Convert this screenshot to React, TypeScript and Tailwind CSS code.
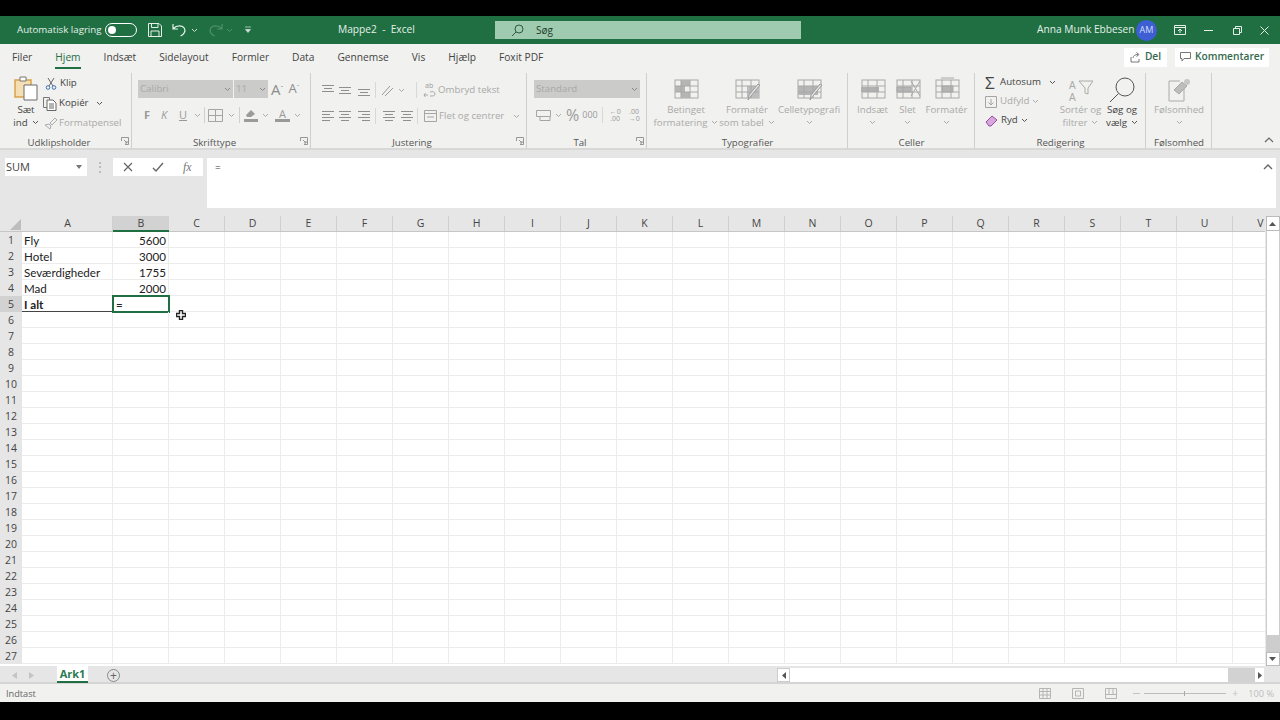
import type { ReactNode } from "react";

const COLS = ["C", "D", "E", "F", "G", "H", "I", "J", "K", "L", "M", "N", "O", "P", "Q", "R", "S", "T", "U", "V"];
const TABS = ["Filer", "Hjem", "Indsæt", "Sidelayout", "Formler", "Data", "Gennemse", "Vis", "Hjælp", "Foxit PDF"];
const ROWS = Array.from({ length: 27 }, (_, i) => i + 1);
const DATA: Record<number, [string, string]> = {
  1: ["Fly", "5600"],
  2: ["Hotel", "3000"],
  3: ["Seværdigheder", "1755"],
  4: ["Mad", "2000"],
};

function Chev({ c = "#8a8a8a", className = "" }: { c?: string; className?: string }) {
  return (
    <svg width="7" height="5" viewBox="0 0 7 5" className={className}>
      <path d="M1 1l2.5 2.5L6 1" fill="none" stroke={c} strokeWidth="1" />
    </svg>
  );
}

function Lines({ align, valign = 0 }: { align: "l" | "c" | "r"; valign?: number }) {
  const x = align === "l" ? 1 : align === "c" ? 3 : 5;
  const d =
    valign === 0
      ? `M1 1.5H13M${x} 4.5H${x + 8}M1 7.5H13M${x} 10.5H${x + 8}`
      : valign === 1
        ? "M1 1.5H13M3 4.5H11M1 7.5H13"
        : valign === 2
          ? "M1 3.5H13M3 6.5H11M1 9.5H13"
          : "M1 5.5H13M3 8.5H11M1 11.5H13";
  return (
    <svg width="14" height="12" viewBox="0 0 14 12">
      <path d={d} stroke="#8f8f8f" fill="none" />
    </svg>
  );
}

function TableIcon({ kind }: { kind: number }) {
  return (
    <svg width="28" height="26" viewBox="0 0 28 26">
      <rect x="3" y="3" width="23" height="18" fill="#f1f1ef" stroke="#a8a8a8" />
      {kind === 0 && <path d="M9 3h9v6H9zM3 9h10v6H3zM9 15h9v6H9z" fill="#b5b5b5" />}
      {kind === 1 && <path d="M14 9h12v12H14z" fill="#bdbdbd" />}
      {kind === 2 && <path d="M3 9h20v9H3z" fill="#b5b5b5" />}
      {kind === 3 && <path d="M2 10h18v5H2z" fill="#b0b0b0" />}
      {kind === 4 && <path d="M3 10h14v5H3zM17 4l9 15M26 4l-9 15" fill="#b5b5b5" stroke="#a8a8a8" />}
      {kind === 5 && <path d="M9 9h11v6H9zM8 1h13" fill="#b5b5b5" stroke="#a8a8a8" />}
      <path d="M3 9h23M3 15h23M9 3v18M18 3v18" stroke="#a8a8a8" fill="none" />
      {kind >= 1 && kind <= 2 && <path d="M27 8l-9 11-3 4 1-5 9-11z" fill="#e3e3e3" stroke="#9c9c9c" />}
    </svg>
  );
}

function BigBtn({ w, icon, l1, l2, chev, dark }: { w: number; icon: ReactNode; l1: string; l2?: string; chev?: boolean; dark?: boolean }) {
  const text = dark ? "text-[#444]" : "text-[#a9a9a9]";
  return (
    <div className={`flex flex-col items-center shrink-0 ${text}`} style={{ width: w }}>
      <div className="h-[26px] flex items-center justify-center">{icon}</div>
      <div className="leading-[13px] text-center whitespace-nowrap">{l1}</div>
      <div className="leading-[13px] flex items-center gap-1 whitespace-nowrap h-[13px]">
        {l2}
        {chev && <Chev c={dark ? "#555" : "#aaa"} />}
      </div>
    </div>
  );
}

function Launcher() {
  return (
    <svg width="8" height="8" viewBox="0 0 8 8" className="absolute right-[3px] bottom-[4px]">
      <path d="M.5 4V.5H7.5V7.5H4M3 3l3 3M6 4v2H4" fill="none" stroke="#8c8c8c" strokeWidth="0.9" />
    </svg>
  );
}

function Group({ w, label, launcher, children, sep = true }: { w: number; label: string; launcher?: boolean; children: ReactNode; sep?: boolean }) {
  return (
    <div className="relative shrink-0 h-[76px] flex flex-col" style={{ width: w }}>
      <div className="h-[63px] flex">{children}</div>
      <div className={`text-center text-[9.7px] leading-[13px] text-[#555] ${launcher ? "pr-[14px]" : ""}`}>{label}</div>
      {launcher && <Launcher />}
      {sep && <div className="absolute right-0 top-0 bottom-0 w-px bg-[#cfcfcd]" />}
    </div>
  );
}

function Cell({ w, children, className = "" }: { w: number; children?: ReactNode; className?: string }) {
  return (
    <div
      className={`shrink-0 h-4 border-r border-b border-[#ececec] font-['Lato',sans-serif] text-[11.6px] leading-[17px] text-[#222] overflow-hidden whitespace-nowrap ${className}`}
      style={{ width: w }}
    >
      {children}
    </div>
  );
}

function TitleBar() {
  return (
    <div className="h-[28px] bg-[#1f6f43] flex items-center text-[10.2px] text-[#e4efe8] shrink-0">
      <span className="ml-[17px] w-[88px] whitespace-nowrap text-[9.7px]">Automatisk lagring</span>
      <div className="w-[32px] h-[14px] rounded-full border border-white flex items-center pl-[2px]">
        <div className="w-[8px] h-[8px] rounded-full bg-white" />
      </div>
      <svg width="14" height="14" viewBox="0 0 14 14" className="ml-[11px]">
        <path d="M.5.5h10.5l2.5 2.5v10.5H.5zM3.5.5v4h6.5v-4M3 13.5V8h8v5.5" fill="none" stroke="#e4efe8" />
      </svg>
      <svg width="15" height="14" viewBox="0 0 15 14" className="ml-[10px]">
        <path d="M1 1v5h5M1.5 5.5c3-3.5 9-3.5 11 0 1.5 3-1 6-4 7.5" fill="none" stroke="#e4efe8" strokeWidth="1.2" />
      </svg>
      <Chev c="#cfe1d6" className="ml-[4px]" />
      <svg width="15" height="14" viewBox="0 0 15 14" className="ml-[10px]">
        <path d="M14 1v5H9M13.5 5.5c-3-3.5-9-3.5-11 0-1.5 3 1 6 4 7.5" fill="none" stroke="#4f8f6b" strokeWidth="1.2" />
      </svg>
      <Chev c="#4f8f6b" className="ml-[3px]" />
      <svg width="8" height="8" viewBox="0 0 8 8" className="ml-[11px]">
        <path d="M1 1h6M1.5 3.5h5L4 6.5z" fill="#cfe1d6" stroke="#cfe1d6" strokeWidth="0.7" />
      </svg>
      <span className="ml-[86px] w-[157px]">Mappe2&nbsp; -&nbsp; Excel</span>
      <div className="w-[306px] h-[18px] bg-[#9fccb1] flex items-center text-[#1d3a2a] text-[10px]">
        <svg width="13" height="13" viewBox="0 0 13 13" className="ml-[16px]">
          <circle cx="8" cy="5" r="4" fill="none" stroke="#2c5a40" />
          <path d="M5 8l-4 4" stroke="#2c5a40" />
        </svg>
        <span className="ml-[12px]">Søg</span>
      </div>
      <span className="ml-[236px] w-[99px] whitespace-nowrap">Anna Munk Ebbesen</span>
      <div className="w-[21px] h-[21px] rounded-full bg-[#3d5fd3] text-[9px] flex items-center justify-center text-[#d5dcf5]">AM</div>
      <svg width="12" height="10" viewBox="0 0 12 10" className="ml-[17px]">
        <path d="M.5.5h11v9H.5zM.5 2.5h11M6 8V4M4 6l2-2 2 2" fill="none" stroke="#e4efe8" />
      </svg>
      <div className="ml-[18px] w-[9px] h-px bg-[#e4efe8]" />
      <svg width="9" height="9" viewBox="0 0 9 9" className="ml-[20px]">
        <path d="M.5 2.5h6v6h-6zM2.5 2.5v-2h6v6h-2" fill="none" stroke="#e4efe8" />
      </svg>
      <svg width="9" height="9" viewBox="0 0 9 9" className="ml-[18px]">
        <path d="M.5.5l8 8M8.5.5l-8 8" stroke="#e4efe8" />
      </svg>
    </div>
  );
}

function TabRow() {
  return (
    <div className="h-[26px] bg-[#f1f1ef] flex items-center shrink-0 text-[10.2px] text-[#444] pl-[12px]">
      <div className="flex gap-[23px] pt-[1px]">
        {TABS.map((t) => (
          <div key={t} className={`relative whitespace-nowrap ${t === "Hjem" ? "text-[#1f6f43] font-medium" : ""}`}>
            {t}
            {t === "Hjem" && <div className="absolute left-0 right-0 -bottom-[4px] h-[2px] bg-[#1f6f43]" />}
          </div>
        ))}
      </div>
      <div className="ml-auto flex gap-[8px] pr-[11px] text-[#33694c] font-semibold">
        <div className="w-[43px] h-[19px] bg-white flex items-center justify-center gap-1">
          <svg width="11" height="11" viewBox="0 0 11 11">
            <path d="M1 5v5h8V7M3 6c0-2 2-3.5 5-3.5M6.5.5l2.5 2-2.5 2" fill="none" stroke="#777" />
          </svg>
          Del
        </div>
        <div className="w-[94px] h-[19px] bg-white flex items-center justify-center gap-1">
          <svg width="11" height="10" viewBox="0 0 11 10">
            <path d="M.5.5h10v6H4L2 9V6.5H.5z" fill="none" stroke="#777" />
          </svg>
          Kommentarer
        </div>
      </div>
    </div>
  );
}

function Ribbon() {
  return (
    <div className="h-[80px] bg-[#f1f1ef] flex pt-[3px] shrink-0 text-[9.7px] text-[#a9a9a9] border-b-[2px] border-[#d8d8d6] relative">
      <Group w={132} label="Udklipsholder" launcher>
        <div className="w-[40px] pl-[12px] flex flex-col items-center text-[#444]">
          <svg width="24" height="26" viewBox="0 0 24 26" className="mt-[2px]">
            <path d="M1 5h16v17H1z" fill="#f4dfb4" stroke="#d9a24a" strokeWidth="1.5" />
            <path d="M6 2h6v4H6z" fill="#fff" stroke="#777" />
            <path d="M10 10h13v15H10z" fill="#fff" stroke="#6a6a6a" />
          </svg>
          <div className="mt-[2px] leading-[13px]">Sæt</div>
          <div className="leading-[13px] flex items-center gap-1 whitespace-nowrap">ind <Chev c="#555" /></div>
        </div>
        <div className="ml-[3px] pt-[3px] flex flex-col gap-[5px] text-[#444]">
          <div className="h-[15px] flex items-center gap-[3px] ml-[2px]">
            <svg width="12" height="13" viewBox="0 0 12 13">
              <path d="M3 1l5 8M9 1L4 9" stroke="#666" />
              <circle cx="3" cy="10.5" r="1.8" fill="none" stroke="#3f73b5" />
              <circle cx="9" cy="10.5" r="1.8" fill="none" stroke="#3f73b5" />
            </svg>
            Klip
          </div>
          <div className="h-[15px] flex items-center gap-[2px]">
            <svg width="14" height="14" viewBox="0 0 14 14">
              <path d="M.5.5h6v10h-6z" fill="none" stroke="#777" />
              <path d="M4 3h6l3 3v7.5H4zM6 7h5M6 9h5M6 11h5" fill="#fff" stroke="#666" />
            </svg>
            Kopiér
            <Chev c="#555" className="ml-[5px]" />
          </div>
          <div className="h-[15px] flex items-center gap-[1px] text-[#a9a9a9]">
            <svg width="14" height="13" viewBox="0 0 14 13" className="ml-[1px]">
              <path d="M1 8l4-1 2 2-1 3zM6 6l5-5 2 2-5 5z" fill="none" stroke="#aaa" />
            </svg>
            Formatpensel
          </div>
        </div>
      </Group>

      <Group w={179} label="Skrifttype" launcher>
        <div className="pl-[6px] pt-[7px] flex flex-col w-full">
          <div className="flex items-center h-[18px]">
            <div className="w-[95px] h-[18px] bg-[#cbcbc9] flex items-center justify-between px-[2px]">Calibri <Chev /></div>
            <div className="ml-[1px] w-[34px] h-[18px] bg-[#cbcbc9] flex items-center justify-between px-[2px]">11 <Chev /></div>
            <span className="ml-[3px] text-[15px] text-[#8d8d8d]">A<sup className="text-[7px]">ˆ</sup></span>
            <span className="ml-[5px] text-[13px] text-[#8d8d8d]">A<sup className="text-[7px]">ˇ</sup></span>
          </div>
          <div className="flex items-center h-[18px] mt-[8px] pl-[6px] text-[11px] text-[#9a9a9a]">
            <span className="font-bold w-[17px]">F</span>
            <span className="italic w-[18px]">K</span>
            <span className="underline w-[15px]">U</span>
            <Chev c="#aaa" />
            <div className="mx-[3px] w-px h-[16px] bg-[#d0d0ce]" />
            <svg width="15" height="13" viewBox="0 0 15 13">
              <path d="M.5.5h14v12H.5zM7.5.5v12M.5 6.5h14" fill="none" stroke="#a5a5a5" />
            </svg>
            <Chev c="#aaa" className="ml-[5px]" />
            <div className="mx-[4px] w-px h-[16px] bg-[#d0d0ce]" />
            <svg width="16" height="14" viewBox="0 0 16 14" className="-ml-[1px]">
              <path d="M3 7l5-5 4 4-4 3H4zM1 11h14v3H1z" fill="#9b9b9b" />
            </svg>
            <Chev c="#aaa" className="ml-[3px]" />
            <div className="ml-[6px] w-[15px] flex flex-col items-center leading-[11px]">
              A<div className="w-full h-[3px] bg-[#999]" />
            </div>
            <Chev c="#aaa" className="ml-[4px]" />
          </div>
        </div>
      </Group>

      <Group w={216} label="Justering" launcher>
        <div className="pl-[10px] pt-[9px] flex flex-col">
          <div className="flex items-center h-[16px]">
            <div className="w-[17px]"><Lines align="c" valign={1} /></div>
            <div className="w-[19px]"><Lines align="c" valign={2} /></div>
            <div className="w-[18px]"><Lines align="c" valign={3} /></div>
            <div className="w-px h-[16px] bg-[#d8d8d6]" />
            <svg width="15" height="13" viewBox="0 0 15 13" className="ml-[4px]">
              <path d="M2 11L10 2M5 12l8-8" stroke="#9a9a9a" fill="none" />
            </svg>
            <Chev c="#aaa" className="ml-[3px]" />
            <div className="ml-[11px] w-px h-[16px] bg-[#d8d8d6]" />
            <div className="ml-[6px] flex items-center whitespace-nowrap">
              <div className="relative w-[14px] h-[14px] mr-[1px]">
                <span className="absolute left-[2px] -top-[1px] text-[7px] leading-[8px] text-[#9a9a9a]">ab</span>
                <svg width="13" height="6" viewBox="0 0 13 6" className="absolute left-0 bottom-0">
                  <path d="M1 4h4M2.5 2L1 4l1.5 2M7 1c3-1 5 0 5 2s-2 2-5 2" fill="none" stroke="#9a9a9a" strokeWidth="0.8" />
                </svg>
              </div>
              Ombryd tekst
            </div>
          </div>
          <div className="flex items-center h-[16px] mt-[10px]">
            <div className="w-[17px]"><Lines align="l" /></div>
            <div className="w-[19px]"><Lines align="c" /></div>
            <div className="w-[18px]"><Lines align="r" /></div>
            <div className="w-px h-[16px] bg-[#d8d8d6]" />
            <div className="ml-[6px] w-[18px]"><Lines align="c" /></div>
            <div className="w-[17px]"><Lines align="c" /></div>
            <div className="w-px h-[16px] bg-[#d8d8d6]" />
            <svg width="13" height="12" viewBox="0 0 13 12" className="ml-[6px]">
              <path d="M.5.5h12v11H.5zM.5 3.5h12M3 7h7" fill="none" stroke="#a5a5a5" />
            </svg>
            <span className="ml-[2px] whitespace-nowrap">Flet og centrer</span>
            <Chev c="#aaa" className="ml-[9px]" />
          </div>
        </div>
      </Group>

      <Group w={120} label="Tal" launcher>
        <div className="pl-[7px] pt-[7px] flex flex-col">
          <div className="w-[106px] h-[18px] bg-[#cbcbc9] flex items-center justify-between px-[2px]">Standard <Chev /></div>
          <div className="flex items-center h-[18px] mt-[8px] pl-[2px] text-[#9a9a9a]">
            <svg width="15" height="12" viewBox="0 0 15 12">
              <path d="M.5 1.5h14v6H.5zM4 7.5h10v4H4z" fill="#f1f1ef" stroke="#a5a5a5" />
            </svg>
            <Chev c="#aaa" className="ml-[4px]" />
            <span className="ml-[4px] text-[16px] leading-[18px]">%</span>
            <span className="ml-[3px] text-[9px]">000</span>
            <div className="ml-[4px] w-px h-[16px] bg-[#d8d8d6]" />
            <span className="ml-[5px] text-[7px] leading-[7px] text-center w-[15px]">←0<br />.00</span>
            <span className="ml-[4px] text-[7px] leading-[7px] text-center w-[15px]">.00<br />→0</span>
          </div>
        </div>
      </Group>

      <Group w={201} label="Typografier">
        <div className="flex pl-[8px] pt-[4px]">
          <BigBtn w={62} icon={<TableIcon kind={0} />} l1="Betinget" l2="formatering" chev />
          <div className="ml-[4px]"><BigBtn w={52} icon={<TableIcon kind={1} />} l1="Formatér" l2="som tabel" chev /></div>
          <div className="ml-[2px]"><BigBtn w={68} icon={<TableIcon kind={2} />} l1="Celletypografi" chev /></div>
        </div>
      </Group>

      <Group w={127} label="Celler">
        <div className="flex pl-[6px] pt-[4px]">
          <BigBtn w={37} icon={<TableIcon kind={3} />} l1="Indsæt" chev />
          <BigBtn w={33} icon={<TableIcon kind={4} />} l1="Slet" chev />
          <div className="ml-[2px]"><BigBtn w={41} icon={<TableIcon kind={5} />} l1="Formatér" chev /></div>
        </div>
      </Group>

      <Group w={171} label="Redigering">
        <div className="flex pl-[10px]">
          <div className="w-[72px] flex flex-col text-[#444]">
            <div className="h-[19px] flex items-center gap-[3px] whitespace-nowrap">
              <span className="text-[17px] leading-[17px] w-[12px] text-[#444]">Σ</span>
              Autosum
              <Chev c="#555" className="ml-[5px]" />
            </div>
            <div className="h-[19px] flex items-center gap-[3px] text-[#a9a9a9]">
              <svg width="12" height="12" viewBox="0 0 12 12">
                <path d="M.5.5h11v11H.5zM6 3v6M3.5 6.5L6 9l2.5-2.5" fill="none" stroke="#a5a5a5" />
              </svg>
              Udfyld
              <Chev c="#aaa" />
            </div>
            <div className="h-[19px] flex items-center gap-[3px]">
              <svg width="13" height="12" viewBox="0 0 13 12">
                <path d="M1 7l6-6 5 4-6 6H4z" fill="#d7a8dc" stroke="#9a4aa5" />
              </svg>
              Ryd
              <Chev c="#555" />
            </div>
          </div>
          <div className="pt-[4px] flex">
            <BigBtn
              w={47}
              icon={
                <svg width="26" height="26" viewBox="0 0 26 26">
                  <path d="M11 4h14l-5 7v6l-3-1v-5z" fill="none" stroke="#aaa" />
                  <text x="1" y="12" fontSize="10" fill="#aaa" fontFamily="Liberation Sans">A</text>
                  <text x="1" y="24" fontSize="10" fill="#aaa" fontFamily="Liberation Sans">A</text>
                </svg>
              }
              l1="Sortér og"
              l2="filtrer"
              chev
            />
            <BigBtn
              w={36}
              dark
              icon={
                <svg width="28" height="26" viewBox="0 0 28 26">
                  <circle cx="17" cy="10" r="9" fill="none" stroke="#555" />
                  <path d="M10.5 16.5L2 25" stroke="#555" />
                </svg>
              }
              l1="Søg og"
              l2="vælg"
              chev
            />
          </div>
        </div>
      </Group>

      <Group w={66} label="Følsomhed">
        <div className="flex pl-[8px] pt-[4px]">
          <BigBtn
            w={50}
            icon={
              <svg width="26" height="26" viewBox="0 0 26 26">
                <path d="M3 4h11M3 4v20h15V12" fill="none" stroke="#aaa" />
                <path d="M8 13l8-8 5 4-8 8z" fill="#bdbdbd" stroke="#aaa" />
                <circle cx="21" cy="5" r="3" fill="#c7c7c7" />
              </svg>
            }
            l1="Følsomhed"
            chev
          />
        </div>
      </Group>

      <svg width="10" height="6" viewBox="0 0 10 6" className="absolute right-[6px] bottom-[5px]">
        <path d="M1 5l4-4 4 4" fill="none" stroke="#666" strokeWidth="1.2" />
      </svg>
    </div>
  );
}

function FormulaBar() {
  return (
    <div className="h-[66px] bg-[#e6e6e6] flex items-start shrink-0 pt-[8px] pl-[5px] text-[#444] text-[11px]">
      <div className="w-[82px] h-[18px] bg-white flex items-center justify-between pl-[1px] pr-[5px]">
        SUM
        <svg width="6" height="4" viewBox="0 0 6 4"><path d="M0 0h6L3 4z" fill="#777" /></svg>
      </div>
      <div className="w-[26px] h-[18px] flex items-center justify-center text-[#aaa] text-[12px]">⋮</div>
      <div className="w-[90px] h-[18px] bg-white flex items-center">
        <svg width="12" height="12" viewBox="0 0 12 12" className="ml-[9px]"><path d="M2 2l8 8M10 2l-8 8" stroke="#666" strokeWidth="1.2" /></svg>
        <svg width="12" height="12" viewBox="0 0 12 12" className="ml-[18px]"><path d="M1 7l3 3 7-8" fill="none" stroke="#666" strokeWidth="1.4" /></svg>
        <span className="ml-[19px] font-['Liberation_Serif',serif] italic text-[12px] text-[#777]">fx</span>
      </div>
      <div className="relative ml-[4px] w-[1069px] h-[50px] bg-white pl-[8px] pt-[2px] text-[10px]">
        =
        <svg width="10" height="6" viewBox="0 0 10 6" className="absolute right-[3px] top-[6px]">
          <path d="M1 5l4-4 4 4" fill="none" stroke="#666" strokeWidth="1.4" />
        </svg>
      </div>
    </div>
  );
}

function Sheet() {
  return (
    <div className="flex-1 min-h-0 flex bg-white relative">
      <div className="w-[1265px] overflow-hidden">
        <div className="flex h-[16px] bg-[#e6e6e6] text-[10.5px] leading-[15px] text-[#444] border-b border-[#c6c6c6]">
          <div className="w-[22px] shrink-0 relative">
            <svg width="11" height="11" viewBox="0 0 11 11" className="absolute right-[1px] bottom-[1px]"><path d="M11 0v11H0z" fill="#bdbdbd" /></svg>
          </div>
          <div className="w-[91px] shrink-0 text-center pl-[1px] border-r border-[#cfcfcf]">A</div>
          <div className="w-[56px] shrink-0 text-center bg-[#d2d2d2] border-b-2 border-[#1f6f43] h-[16px]">B</div>
          {COLS.map((c) => (
            <div key={c} className="w-[56px] shrink-0 text-center border-r border-[#cfcfcf]">{c}</div>
          ))}
        </div>
        {ROWS.map((r) => (
          <div key={r} className="flex h-4">
            <div className={`w-[22px] shrink-0 text-center text-[10.5px] leading-[17px] text-[#444] ${r === 5 ? "bg-[#d2d2d2]" : "bg-[#e6e6e6]"}`}>{r}</div>
            <Cell w={91} className={`pl-[2px] ${r === 5 ? "font-bold border-b-[#444]" : ""}`}>{r === 5 ? "I alt" : DATA[r]?.[0]}</Cell>
            <Cell w={56} className={`text-right pr-[2px] relative ${r === 5 ? "outline-2 -outline-offset-1 outline-[#1f6f43] !text-left pl-[3px] overflow-visible" : ""}`}>
              {r === 5 ? "=" : DATA[r]?.[1]}
            </Cell>
            {COLS.map((c) => (
              <Cell key={c} w={56} />
            ))}
          </div>
        ))}
      </div>
      <div className="w-[15px] bg-[#e9e9e9] flex flex-col items-center">
        <div className="w-[14px] h-[15px] bg-white border border-[#bbb] flex items-center justify-center">
          <svg width="7" height="4" viewBox="0 0 7 4"><path d="M3.5 0L7 4H0z" fill="#555" /></svg>
        </div>
        <div className="w-[14px] flex-1 flex flex-col">
          <div className="h-[404px] bg-white border-x border-[#ccc]" />
          <div className="flex-1 bg-[#cdcdcd]" />
        </div>
        <div className="w-[14px] h-[14px] bg-white border border-[#bbb] flex items-center justify-center">
          <svg width="7" height="4" viewBox="0 0 7 4"><path d="M0 0h7L3.5 4z" fill="#555" /></svg>
        </div>
      </div>
      {/* musemarkør */}
      <svg width="10" height="10" viewBox="0 0 10 10" className="absolute left-[176px] top-[94px]">
        <path d="M3.5.5h3v3h3v3h-3v3h-3v-3h-3v-3h3z" fill="#fff" stroke="#222" strokeWidth="1.4" />
      </svg>
    </div>
  );
}

function BottomBars() {
  return (
    <>
      <div className="h-[18px] bg-[#e6e6e6] flex items-start shrink-0 border-b-2 border-[#d4d4d4]">
        <svg width="5" height="7" viewBox="0 0 5 7" className="ml-[12px] mt-[6px]"><path d="M5 0v7L0 3.5z" fill="#c4c4c4" /></svg>
        <svg width="5" height="7" viewBox="0 0 5 7" className="ml-[12px] mt-[6px]"><path d="M0 0v7l5-3.5z" fill="#c4c4c4" /></svg>
        <div className="ml-[23px] -mt-[1px] pt-[2px] w-[31px] h-[18px] bg-white border-b-2 border-[#1f6f43] text-[#2a7a50] text-[11px] font-bold flex items-center justify-center">Ark1</div>
        <div className="ml-[19px] mt-[3px] w-[13px] h-[13px] rounded-full border border-[#888] text-[#666] flex items-center justify-center text-[12px] leading-[12px]">+</div>
        <div className="ml-[657px] mt-[2px] w-[13px] h-[14px] bg-white border border-[#ccc] flex items-center justify-center">
          <svg width="4" height="7" viewBox="0 0 4 7"><path d="M4 0v7L0 3.5z" fill="#555" /></svg>
        </div>
        <div className="mt-[2px] w-[438px] h-[14px] bg-white" />
        <div className="mt-[2px] w-[27px] h-[14px] bg-[#d2d2d2]" />
        <div className="mt-[2px] w-[9px] h-[14px] bg-white flex items-center justify-center">
          <svg width="4" height="7" viewBox="0 0 4 7"><path d="M0 0v7l4-3.5z" fill="#555" /></svg>
        </div>
      </div>
      <div className="h-[18px] bg-[#f1f1ef] flex items-center shrink-0 text-[9.2px] text-[#666] pl-[6px] pt-[1px]">
        <span>Indtast</span>
        <svg width="12" height="11" viewBox="0 0 12 11" className="ml-auto"><path d="M.5.5h11v10H.5zM4 .5v10M8 .5v10M.5 3.5h11M.5 7h11" fill="none" stroke="#b5b5b5" /></svg>
        <svg width="12" height="11" viewBox="0 0 12 11" className="ml-[21px]"><path d="M.5.5h11v10H.5zM3.5 3h5v5h-5z" fill="none" stroke="#b5b5b5" /></svg>
        <svg width="12" height="11" viewBox="0 0 12 11" className="ml-[21px]"><path d="M.5.5h11v10H.5zM4 .5v6h4v-6M.5 6.5h11" fill="none" stroke="#b5b5b5" /></svg>
        <span className="ml-[16px] w-[7px] h-px bg-[#c4c4c4]" />
        <div className="ml-[4px] w-[82px] h-px bg-[#bdbdbd] relative">
          <div className="absolute left-[40px] -top-[2px] w-px h-[5px] bg-[#aaa]" />
        </div>
        <span className="ml-[6px] text-[#c4c4c4] text-[11px]">+</span>
        <span className="ml-[10px] mr-[6px] text-[#bdbdbd]">100 %</span>
      </div>
    </>
  );
}

export default function App() {
  return (
    <div className="w-[1280px] h-[720px] bg-black pt-[16px] pb-[18px] overflow-hidden font-['Open_Sans','Noto_Sans',sans-serif]">
      <div className="h-[686px] flex flex-col">
        <TitleBar />
        <TabRow />
        <Ribbon />
        <FormulaBar />
        <Sheet />
        <BottomBars />
      </div>
    </div>
  );
}
